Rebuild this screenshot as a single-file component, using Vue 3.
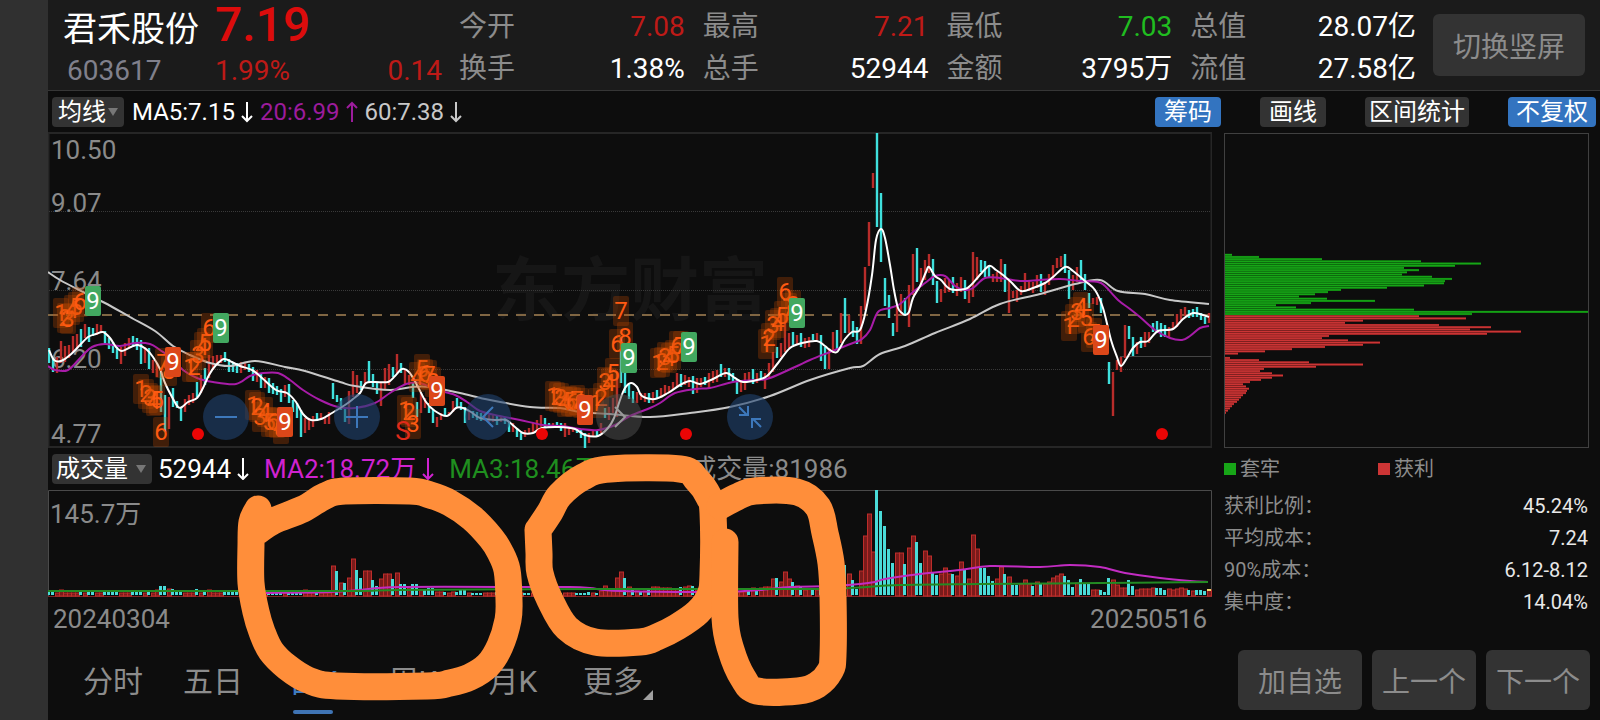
<script setup>
import { ref } from 'vue'

const quotes = [
  { label: '今开', value: '7.08', tone: 'up' },
  { label: '最高', value: '7.21', tone: 'up' },
  { label: '最低', value: '7.03', tone: 'down' },
  { label: '总值', value: '28.07亿', tone: 'plain' },
  { label: '换手', value: '1.38%', tone: 'plain' },
  { label: '总手', value: '52944', tone: 'plain' },
  { label: '金额', value: '3795万', tone: 'plain' },
  { label: '流值', value: '27.58亿', tone: 'plain' },
]

const tabs = ['分时', '五日', '日K', '周K', '月K', '更多']
const activeTab = ref('日K')
const average = ref('均线')
const indicator = ref('成交量')

const chipStats = [
  ['获利比例：', '45.24%'],
  ['平均成本：', '7.24'],
  ['90%成本：', '6.12-8.12'],
  ['集中度：', '14.04%'],
]

// One entry per trading day: colour letter, high and low in chart units.
const candleText = `c348-363 c358-372 r357-373 r341-363 r346-362 r345-358 r336-353 r334-348 c329-347 r324-338
c327-342 c328-336 r324-335 r325-333 c331-343 c338-349 c342-353 c347-359 r347-364 r343-356
r338-348 c336-347 c338-350 c340-364 r347-363 c348-369 r360-373 r363-377 c372-412 c395-432
r397-429 c388-407 c401-408 c407-421 r399-412 r395-405 r393-403 c382-397 r375-393 c368-385
r355-378 r356-370 r355-363 r355-363 c352-362 c359-372 c362-372 c363-373 r362-373 r363-370
c364-372 c367-381 r370-382 c373-388 r377-388 c378-393 c383-394 c386-395 c389-402 r385-397
c384-403 c400-412 c403-418 c410-437 r418-433 r418-430 r416-427 c413-421 r413-420 r417-424
r412-424 c383-399 c395-402 c398-410 c407-422 r391-424 r371-397 r375-393 c381-390 r372-385
c361-383 c374-387 c382-394 r382-406 r368-389 r364-385 c367-377 r354-373 c363-373 r370-384
r375-385 c383-398 c402-417 r393-413 r398-408 c403-413 c410-423 r417-427 r413-420 c408-415
r412-416 r401-412 c398-408 c402-410 c407-423 r412-420 c411-418 c412-420 c413-421 r413-421
r415-422 r415-422 c416-425 r417-422 c417-424 c421-432 r423-432 c428-437 c433-440 r430-437
r428-434 r423-432 r420-430 r415-427 c418-427 c423-428 r423-427 c422-426 c423-431 r423-437
r427-435 r427-432 c428-433 c430-438 c433-448 r433-443 r430-437 c430-437 r423-433 c408-418
r407-420 r398-413 r373-417 c337-383 c373-393 c384-399 c391-403 r392-403 r393-400 r393-402
c393-403 r392-403 c390-399 r388-398 r385-395 r386-393 r382-390 r373-387 c374-387 r375-385
r377-387 c376-394 r378-393 r378-387 c377-385 r373-388 r371-383 r370-382 c364-377 r368-377
c368-380 c373-382 c379-394 r380-392 r373-390 r372-382 c369-384 r373-383 c371-380 r373-389
r363-378 r352-372 c347-358 r343-357 r315-352 r333-348 c332-345 r335-345 c333-347 r338-348
r337-347 c334-340 r333-340 c335-361 c347-369 r348-369 r332-353 c330-349 r313-343 c298-333
r315-333 c321-337 c327-344 r306-344 r267-310 r222-266 r173-188 c133-227 c193-262 c278-306
c295-318 c323-336 r307-332 r294-315 c298-315 r285-327 r254-295 c248-282 r268-287 r260-280
r254-273 c259-285 c281-303 r289-302 r278-293 r280-292 c277-293 r283-296 r277-292 c280-299
r287-303 r252-297 r257-280 c260-272 c261-277 c265-277 r274-282 r272-282 r259-282 c264-292
r280-313 r291-298 r290-302 r286-295 r273-290 r280-291 r282-293 r275-288 c274-292 r282-295
r274-285 r265-280 r258-268 r256-267 c254-273 c270-299 r275-290 r267-282 c260-280 c274-290
c293-308 r298-304 r297-305 c298-313 c325-332 c362-384 r372-416 r360-370 r357-372 r325-358
c326-339 c337-356 r342-354 c337-348 r332-347 r332-343 c323-332 c321-333 c323-337 c325-337
r327-337 r322-330 r314-327 r309-320 r307-316 c310-318 c309-317 c307-317 c313-320 c317-324
r313-323`
const candles = candleText.trim().split(/\s+/).map((entry, i) => {
  const [top, bottom] = entry.slice(1).split('-').map(Number)
  return { x: 48 + i * 4, y: top, h: bottom - top, up: entry[0] === 'r' }
})

// Volume per day from the 72nd day on; earlier days stay at the quiet base level.
const volumeText = `r30 c24 r13 c12 r18 r37 c25 c17 r25 r25 c15 c9 r17 r22 r22 c16 r23 c11 c11 r8
c11 c11 r6 c6 c7 c7 r4 r4 c3 r3 r4 c3 c5 c5 r3 c2 c2 c2 r3 r3 r3 c3 c3 r3 r3 r3 c3 r3 c2 c2
r3 r3 c3 c3 r3 c3 c2 c2 r3 r3 r3 c2 c2 c2 c3 r3 c2 r5 r10 r7 r7 r18 r24 c17 r9 c5 r5 c4 r5 c5
r9 r9 r8 r8 r8 r7 r7 c8 r9 r10 c9 r6 r6 c6 r6 r7 c6 r6 c5 c5 c4 r4 r4 r4 c4 r8 c5 r8 r9 r9
r17 c17 r14 r24 r17 c13 r10 c8 r6 r7 c6 r6 c9 c9 r10 c12 r14 r25 c30 r22 c15 c6 r25 r60 r82 r44`
const peakText = `c105 c84 c69 c46 c32 r43 r43 c31 r48 r60 c53 c32 r45 r40 c22 c20 r22 r28 r22 c21
r20 r34 c25 r17 r61 r47 c27 c27 c19 c14 r17 r29 c21 r19 c10 c10 r12 r16 r12 c9 r14 c12 r12 r14 r18
r20 r22 c19 c15 c8 r13 c16 c12 c11 r6 r6 c5 c3 c17 r16 r11 r8 r8 c15 c9 r6 r7 r7 r7 r8 c7 c7 c5
r7 r6 r7 r8 r7 c5 r5 c5 c5 c4 r6`
const early = { 3: 6, 27: 6, 28: 9, 29: 9, 30: 7, 31: 6, 37: 6, 40: 6, 64: 6 }
const quiet = candles.slice(0, 71).map((c, i) => ({ up: c.up, h: early[i] || 3 }))
const parseVolume = (text) =>
  text.trim().split(/\s+/).map((entry) => ({ up: entry[0] === 'r', h: Number(entry.slice(1)) }))
const peak = parseVolume(peakText)
const middle = parseVolume(volumeText).slice(-(207 - 71))
while (middle.length < 136) middle.splice(50, 0, { up: false, h: 2 })
const volumes = [...quiet, ...middle, ...peak].map((v, i) => ({ ...v, x: 48 + i * 4 }))

// Smooth curve through a flat list of x,y pairs.
function curve(text) {
  const p = text.trim().split(/\s+/).map((pair) => pair.split(',').map(Number))
  let d = `M${p[0][0]} ${p[0][1]}`
  for (let i = 0; i < p.length - 1; i++) {
    const a = p[i - 1] || p[i]
    const b = p[i]
    const c = p[i + 1]
    const e = p[i + 2] || c
    d += `C${b[0] + (c[0] - a[0]) / 6} ${b[1] + (c[1] - a[1]) / 6} ${c[0] - (e[0] - b[0]) / 6} ${c[1] - (e[1] - b[1]) / 6} ${c[0]} ${c[1]}`
  }
  return d
}

const ma5 = curve(`49,350 54,360 61,361 70,355 80,345 88,337 96,334 103,332 110,338 116,347 122,351 131,347
138,345 146,349 153,357 160,369 165,383 172,397 178,407 182,407 188,402 197,398 203,388 209,375 216,365 224,359
232,362 240,366 252,370 262,378 276,390 287,393 296,402 303,414 311,420 321,419 332,413 345,405 353,399 360,393
366,383 375,382 388,382 395,376 402,369 409,372 417,385 426,402 435,411 447,416 456,408 463,408 471,412 480,418
495,420 506,420 515,427 523,433 533,433 542,428 560,427 575,429 585,435 598,436 608,428 614,418 620,400 625,388
631,383 637,387 642,396 655,399 668,393 680,385 690,381 700,384 713,379 726,373 735,378 743,382 757,380 767,376
778,363 790,348 802,343 817,341 825,346 830,350 837,352 845,339 852,332 860,330 866,310 872,275 876,240 881,229
885,238 890,265 894,290 898,308 902,313 905,315 909,312 913,298 920,286 926,272 929,267 935,276 941,280 950,289
965,289 972,284 979,276 989,266 996,270 1003,275 1011,282 1021,291 1033,288 1045,283 1053,277 1065,267 1073,271
1085,281 1095,290 1103,308 1111,340 1117,357 1121,366 1127,358 1133,348 1140,342 1148,341 1158,331 1173,329
1183,319 1193,313 1203,315 1209,317`)
const ma20 = curve(`48,366 55,370 68,370 82,356 92,347 105,344 120,346 135,343 150,344 160,350 173,359 183,370
197,378 213,382 236,384 250,376 263,373 278,373 290,380 303,390 320,400 338,407 355,408 375,403 390,393 406,384
420,383 437,390 455,395 467,402 480,411 500,416 520,420 543,425 562,426 580,429 598,430 615,425 630,416 650,408
660,403 675,393 695,389 710,388 733,382 757,380 770,378 795,367 810,360 830,352 853,343 862,339 870,330 878,312
890,308 900,304 913,292 925,283 935,276 945,276 955,286 965,290 973,288 985,278 1000,278 1020,281 1040,280
1060,279 1080,281 1098,282 1105,286 1118,300 1130,309 1140,317 1155,330 1170,338 1182,340 1190,336 1200,328 1209,326`)
const ma60 = curve(`48,272 60,280 83,292 105,303 130,317 155,331 173,346 190,355 210,363 230,366 255,361 285,367
305,371 340,382 355,386 390,390 412,387 430,387 460,393 490,400 530,407 560,408 580,412 610,414 650,417 690,413
730,407 770,396 810,380 850,368 863,366 880,354 905,346 935,333 970,319 1000,304 1040,294 1075,284 1100,280
1118,291 1145,294 1170,300 1209,304`)
const volShort = curve(`266,593 330,592 360,590 400,587 540,587 570,587 590,588 620,591 720,592 760,590 790,587
830,586 860,584 875,582 885,579 920,574 960,570 990,566 1040,567 1070,565 1100,567 1125,573 1160,578 1190,581 1208,582`)
const volLong = curve(`48,591 340,591 400,590 600,589 800,589 850,588 900,585 980,584 1100,583 1208,582`)

const priceLabels = [
  ['10.50', 159], ['9.07', 212], ['7.64', 290], ['6.20', 368], ['4.77', 443],
]

// Sequential count markers: digit, centre x, centre y.
const counts = `1,61,313 2,65,318 3,68,319 4,72,310 5,76,307 6,80,302 7,163,363 8,169,371 1,141,389 2,146,394
3,150,398 4,154,401 5,157,400 6,161,432 1,190,367 2,194,367 3,198,355 4,202,347 5,205,343 6,209,328 1,253,405
2,257,407 3,260,417 4,265,412 5,269,422 6,273,422 7,277,423 8,281,429 1,405,410 2,409,412 3,413,424 4,417,377
5,422,369 6,425,374 7,429,375 8,433,382 1,553,396 2,557,397 3,561,398 4,565,402 5,569,401 6,573,402 7,577,400
8,581,403 1,596,403 2,601,398 3,605,382 4,609,383 5,613,373 6,617,344 7,621,311 8,625,337 1,658,363 2,662,362
3,665,357 4,669,358 5,673,355 6,677,346 7,681,346 1,766,344 2,769,338 3,773,325 4,778,323 5,782,316 6,785,292
7,789,308 8,793,305 1,1069,326 2,1073,319 3,1077,312 4,1081,307 5,1086,318 6,1089,337 7,1094,333`
  .split(/\s+/).map((entry) => entry.split(',').map(Number))
const nines = [
  [85, 286, 'g'], [165, 347, 'r'], [213, 313, 'g'], [277, 407, 'r'], [429, 376, 'r'], [577, 395, 'r'],
  [621, 343, 'g'], [681, 332, 'g'], [789, 298, 'g'], [1093, 325, 'r'],
]
const dots = [198, 542, 686, 1162]

const chipLocked = [8, 35, 98, 197, 257, 231, 180, 195, 183, 178, 208, 228, 221, 220, 200, 163, 117, 104, 91,
  75, 103, 151, 87, 52, 72, 190, 364, 248]
const chipProfit = [195, 242, 139, 121, 215, 267, 246, 297, 263, 105, 98, 124, 156, 139, 101, 68, 41, 14, 1, 6,
  35, 85, 139, 92, 40, 36, 48, 59, 48, 37, 26, 19, 22, 25, 23, 22, 19, 17, 15, 13, 10, 8, 6, 4, 2]
const chips = [...chipLocked, ...chipProfit].map((w, i) => ({
  w, y: 254 + i * 2.195, locked: i < chipLocked.length,
}))

const marks = [
  `258,509 252,522 251,545 251,583 256,612 262,632 271,651 287,667 308,680 337,686 427,686 450,683 470,677 488,665
500,646 508,620 509,600 507,570 500,552 491,538 472,518 450,503 430,495 410,491 345,491 325,496 303,509 273,521 258,531`,
  `538,530 539,553 540,573 550,600 567,628 595,642 640,642 657,637 677,627 698,612 710,595 713,575 713,513 709,497
697,480 680,469 610,469 583,477 560,495 550,512 538,530`,
  `725,542 725,618 731,650 743,678 757,691 798,691 817,685 830,671 833,655 833,597 831,563 825,533 818,507 797,492
755,491 737,497 720,506`,
].map(curve)
</script>

<template>
  <div class="page">
    <aside class="edge"></aside>
    <main class="terminal">
      <header class="summary">
        <div class="brand">
          <h1>君禾股份</h1>
          <strong>7.19</strong>
          <span class="code">603617</span>
          <div class="change"><span>1.99%</span><span>0.14</span></div>
        </div>
        <dl class="quotes">
          <div v-for="q in quotes" :key="q.label">
            <dt>{{ q.label }}</dt>
            <dd :class="q.tone">{{ q.value }}</dd>
          </div>
        </dl>
        <button class="rotate" type="button">切换竖屏</button>
      </header>

      <div class="toolbar">
        <span class="picker">
          <select v-model="average" class="average" aria-label="均线">
            <option>均线</option>
          </select>
          <svg width="10" height="8" viewBox="0 0 10 8"><path d="M0 0H10L5 8Z" fill="#777" /></svg>
        </span>
        <div class="averages">
          <span class="white">MA5:7.15<svg class="arrow" viewBox="0 0 12 22"><path d="M6 1V20M1 15L6 20L11 15" /></svg></span>
          <span class="purple">20:6.99<svg class="arrow" viewBox="0 0 12 22"><path d="M6 21V2M1 7L6 2L11 7" /></svg></span>
          <span class="silver">60:7.38<svg class="arrow" viewBox="0 0 12 22"><path d="M6 1V20M1 15L6 20L11 15" /></svg></span>
        </div>
        <div class="tools">
          <button class="pill on" type="button">筹码</button>
          <button class="pill" type="button">画线</button>
          <button class="pill snug" type="button">区间统计</button>
          <button class="pill on medium" type="button">不复权</button>
        </div>
      </div>

      <div class="board">
        <section class="charts">
          <div class="stage">
            <svg class="plot" viewBox="48 132 1164 316" role="img" aria-label="日K">
              <text class="watermark" x="492" y="315">东方财富</text>
              <rect x="48.5" y="133" width="1163" height="314" fill="none" stroke="#262626" stroke-width="2" />
              <g stroke="#3a3a3a" stroke-dasharray="1 1">
                <path d="M49 211.5H1211M49 290.5H1211M49 369.5H1211" />
              </g>
              <path d="M1120 356.5H1211" stroke="#444" />
              <path d="M48 315H1211" stroke="#806643" stroke-width="2" stroke-dasharray="10 8" />
              <text v-for="[t, y] in priceLabels" :key="t" class="axis" x="51" :y="y">{{ t }}</text>
              <rect v-for="(c, i) in candles" :key="i" :x="c.x - 0.2" :y="c.y" width="2.4" :height="c.h"
                :fill="c.up ? '#b82c2a' : '#3fe0dd'" />
              <g fill="none" stroke-width="2">
                <path :d="ma60" stroke="#c8c8c8" />
                <path :d="ma20" stroke="#a81ca8" />
                <path :d="ma5" stroke="#fff" />
              </g>
              <g v-for="([n, x, y], i) in counts" :key="'n' + i">
                <rect :x="x - 8" :y="y - 15" width="16" height="30" rx="2" fill="#c94a00" fill-opacity="0.28" />
                <text class="count" :x="x" :y="y + 8">{{ n }}</text>
              </g>
              <g v-for="([x, y, tone], i) in nines" :key="'k' + i">
                <rect :x="x" :y="y" width="16" height="30" rx="2" :fill="tone === 'g' ? '#42a860' : '#dc4719'" />
                <text class="nine" :x="x + 8" :y="y + 23">9</text>
              </g>
              <text class="sell" x="403" y="440">S</text>
              <circle v-for="x in dots" :key="x" :cx="x" cy="434" r="6" fill="#ea0505" />
            </svg>
            <div class="controls">
              <button type="button" aria-label="缩小"><svg viewBox="0 0 46 46"><path d="M12 23H34" /></svg></button>
              <button type="button" aria-label="放大"><svg viewBox="0 0 46 46"><path d="M12 23H34M23 12V34" /></svg></button>
              <button type="button" aria-label="左移"><svg viewBox="0 0 46 46"><path d="M28 13L18 23L28 33" /></svg></button>
              <button class="muted" type="button" aria-label="右移"><svg viewBox="0 0 46 46"><path d="M19 13L29 23L19 33" /></svg></button>
              <button type="button" aria-label="收起"><svg viewBox="0 0 46 46"><path d="M12 13L20 21M21 12V21H12M34 33L26 25M25 34V25H34" /></svg></button>
            </div>
          </div>

          <div class="volume-bar">
            <span class="picker">
              <select v-model="indicator" class="indicator" aria-label="指标">
                <option>成交量</option>
              </select>
              <svg width="10" height="8" viewBox="0 0 10 8"><path d="M0 0H10L5 8Z" fill="#777" /></svg>
            </span>
            <div class="readings">
              <span class="white">52944<svg class="arrow" viewBox="0 0 12 22"><path d="M6 0V21M1 16L6 21L11 16" /></svg></span>
              <span class="magenta">MA2:18.72万<svg class="arrow" viewBox="0 0 12 22"><path d="M6 0V21M1 16L6 21L11 16" /></svg></span>
              <span class="green">MA3:18.46万<svg class="arrow" viewBox="0 0 12 22"><path d="M6 0V21M1 16L6 21L11 16" /></svg></span>
              <span class="grey">成交量:81986</span>
            </div>
          </div>

          <svg class="plot" viewBox="48 490 1164 108" role="img" aria-label="成交量">
            <path d="M48.5 597V490.5H1211.5V597" fill="none" stroke="#4a4a4a" />
            <path d="M48 596.5H1211" stroke="#7a2525" />
            <text class="axis" x="50" y="523">145.7万</text>
            <template v-for="(v, i) in volumes" :key="i">
              <rect v-if="v.up" :x="v.x - 0.5" :y="596 - v.h" width="4" :height="v.h" fill="#7a1b1b" stroke="#bd2d2a" />
              <rect v-else :x="v.x - 1" :y="595 - v.h" width="3" :height="v.h" fill="#4adbd8" />
            </template>
            <rect x="1207" y="589" width="4" height="2" fill="#f3d66b" />
            <g fill="none" stroke-width="2">
              <path :d="volShort" stroke="#c22cc2" />
              <path :d="volLong" stroke="#238a23" />
            </g>
          </svg>
          <div class="dates"><time>20240304</time><time>20250516</time></div>
        </section>

        <aside class="chips">
          <svg class="plot" viewBox="1224 132 366 316" role="img" aria-label="筹码">
            <path d="M1224.5 180V254" stroke="#1c5c1c" />
            <rect v-for="(c, i) in chips" :key="i" x="1224" :y="c.y - 0.3" :width="c.w" height="2.2"
              :fill="c.locked ? '#0c6a0c' : '#7e1f1f'" />
            <rect v-for="(c, i) in chips" :key="'b' + i" x="1224" :y="c.y" :width="c.w" height="1.5"
              :fill="c.locked ? '#17a517' : '#cc3535'" />
            <rect x="1224.5" y="133.5" width="364" height="314" fill="none" stroke="#404040" />
          </svg>
          <ul class="legend">
            <li><i class="locked"></i>套牢</li>
            <li><i class="profit"></i>获利</li>
          </ul>
          <dl class="stats">
            <div v-for="[k, v] in chipStats" :key="k"><dt>{{ k }}</dt><dd>{{ v }}</dd></div>
          </dl>
        </aside>
      </div>

      <footer class="bottom">
        <nav class="tabs">
          <button v-for="t in tabs" :key="t" type="button" :class="{ active: t === activeTab, more: t === '更多' }"
            @click="activeTab = t">{{ t }}</button>
        </nav>
        <div class="actions">
          <button class="wide" type="button">加自选</button>
          <button type="button">上一个</button>
          <button type="button">下一个</button>
        </div>
      </footer>
    </main>
    <svg class="marks" viewBox="0 0 1600 720" aria-hidden="true">
      <path v-for="(d, i) in marks" :key="i" :d="d" />
    </svg>
  </div>
</template>

<style>
body {
  margin: 0;
  background: #0d0d0d;
}
</style>

<style scoped>
.page {
  position: relative;
  display: grid;
  grid-template-columns: 48px minmax(0, 1fr);
  min-height: 100vh;
  background: #0d0d0d;
  color: #fff;
  font-family: Roboto, "Noto Sans CJK SC", sans-serif;
}
h1, dl, dd, ul {
  margin: 0;
  padding: 0;
}
button, select {
  border: 0;
  padding: 0;
  font-family: inherit;
  cursor: pointer;
}
.edge {
  background: #303030;
}
.summary {
  display: flex;
  height: 90px;
  background: #1b1b1b;
  border-bottom: 1px solid #363636;
}
.brand {
  display: grid;
  grid-template-columns: 152px 227px;
  grid-template-rows: 53px 36px;
  align-items: baseline;
  padding-left: 15px;
  margin-right: 17px;
  line-height: 36px;
}
.brand h1 {
  font-size: 34px;
  font-weight: 400;
  line-height: 50px;
}
.brand strong {
  font-size: 48px;
  font-weight: 500;
  line-height: 50px;
  color: #dc0c0c;
}
.code {
  padding-left: 4px;
  font-size: 28px;
  color: #80808c;
}
.change {
  display: flex;
  justify-content: space-between;
  font-size: 28px;
  color: #be1a17;
}
.quotes {
  flex: 1;
  display: grid;
  grid-template-columns: repeat(4, 1fr);
  grid-auto-rows: 42px;
  column-gap: 18px;
  padding-top: 6px;
  font-size: 28px;
  line-height: 42px;
}
.quotes div {
  display: flex;
  justify-content: space-between;
}
.quotes dt {
  color: #8c8c8c;
}
.up {
  color: #be1a17;
}
.down {
  color: #20bd20;
}
.rotate {
  width: 152px;
  height: 62px;
  margin: 14px 15px 0 17px;
  border-radius: 6px;
  background: #333;
  color: #8c8c8c;
  font-size: 28px;
}
.toolbar {
  display: flex;
  align-items: center;
  height: 41px;
  padding: 0 4px;
}
.picker {
  position: relative;
  display: flex;
}
.picker select {
  appearance: none;
  height: 30px;
  border-radius: 4px;
  background: #333;
  color: #fff;
  font-size: 24px;
  line-height: 30px;
}
.picker svg {
  position: absolute;
  right: 6px;
  top: 11px;
  pointer-events: none;
}
.average {
  width: 72px;
  padding-left: 6px;
}
.picker .indicator {
  width: 100px;
  padding-left: 4px;
}
.averages, .readings {
  display: flex;
  align-items: center;
  margin-left: 8px;
  gap: 7px;
  font-size: 24px;
  line-height: 30px;
  white-space: nowrap;
}
.averages span, .readings span {
  display: flex;
  align-items: center;
  gap: 6px;
}
.readings {
  gap: 15px;
  margin-left: 6px;
  font-size: 26px;
}
.arrow {
  width: 12px;
  height: 22px;
  fill: none;
  stroke: currentColor;
  stroke-width: 2;
}
.purple {
  color: #9c1c9c;
}
.silver {
  color: #c8c8c8;
}
.magenta {
  color: #d022d0;
}
.green {
  color: #1f8f1f;
}
.readings .grey {
  margin-left: 56px;
  color: #8a8a8a;
}
.tools {
  display: flex;
  gap: 39px;
  margin-left: auto;
}
.pill {
  height: 30px;
  padding: 0 9px;
  border-radius: 4px;
  background: #333;
  color: #fff;
  font-size: 24px;
  line-height: 30px;
}
.pill.medium {
  padding: 0 8px;
}
.pill.snug {
  padding: 0 4px;
}
.pill.on {
  background: #3374c0;
}
.board {
  display: grid;
  grid-template-columns: minmax(0, 1fr) 366px;
  column-gap: 12px;
  padding-right: 10px;
}
.plot {
  display: block;
  width: 100%;
  height: auto;
}
.stage {
  position: relative;
}
.watermark {
  font-size: 69px;
  font-weight: 700;
  fill: #161616;
}
.axis {
  font-size: 26px;
  fill: #8a8a8a;
}
.count, .nine, .sell {
  font-size: 24px;
  text-anchor: middle;
}
.count {
  fill: #ff5a12;
}
.nine {
  fill: #fff;
}
.sell {
  font-size: 26px;
  fill: #e02a1a;
}
.controls {
  position: absolute;
  left: 155px;
  bottom: 8px;
  display: flex;
  gap: 85px;
}
.controls button {
  width: 46px;
  height: 46px;
  border-radius: 50%;
  background: rgba(32, 66, 112, 0.6);
}
.controls svg {
  display: block;
  fill: none;
  stroke: #3d78bb;
  stroke-width: 2;
}
.controls .muted {
  background: rgba(80, 80, 80, 0.5);
}
.controls .muted svg {
  stroke: #9a9a9a;
}
.volume-bar {
  display: flex;
  align-items: center;
  height: 42px;
  padding-left: 4px;
}
.dates {
  display: flex;
  justify-content: space-between;
  padding: 0 5px;
  font-size: 26px;
  line-height: 42px;
  color: #8a8a8a;
}
.legend {
  display: flex;
  list-style: none;
  font-size: 20px;
  line-height: 42px;
  color: #8c8c8c;
}
.legend li {
  display: flex;
  align-items: center;
  gap: 4px;
  width: 154px;
}
.legend i {
  width: 12px;
  height: 12px;
}
.locked {
  background: #17a517;
}
.profit {
  background: #cc3535;
}
.stats {
  padding-right: 2px;
  font-size: 20px;
  line-height: 32px;
}
.stats div {
  display: flex;
  justify-content: space-between;
}
.stats dt {
  color: #8c8c8c;
}
.stats dd {
  color: #e8e8e8;
}
.bottom {
  display: flex;
  justify-content: space-between;
  padding: 10px 10px 0 15px;
}
.tabs {
  display: grid;
  grid-template-columns: repeat(6, 100px);
}
.tabs button {
  position: relative;
  height: 64px;
  padding-bottom: 6px;
  background: none;
  color: #8c8c8c;
  font-size: 30px;
}
.tabs .active {
  color: #3f7cc0;
}
.tabs .active::after {
  content: "";
  position: absolute;
  left: 30px;
  bottom: 0;
  width: 40px;
  height: 4px;
  border-radius: 2px;
  background: #3f74b4;
}
.tabs .more::after {
  content: "";
  position: absolute;
  right: 10px;
  bottom: 14px;
  border-left: 10px solid transparent;
  border-bottom: 10px solid #a0a0a0;
}
.actions {
  display: flex;
  gap: 10px;
}
.actions button {
  width: 104px;
  height: 60px;
  border-radius: 6px;
  background: #333;
  color: #8c8c8c;
  font-size: 28px;
}
.actions .wide {
  width: 124px;
}
.marks {
  position: absolute;
  left: 0;
  top: 0;
  width: 100%;
  pointer-events: none;
  fill: none;
  stroke: #ff8e3a;
  stroke-width: 27;
  stroke-linecap: round;
  stroke-linejoin: round;
}
</style>
